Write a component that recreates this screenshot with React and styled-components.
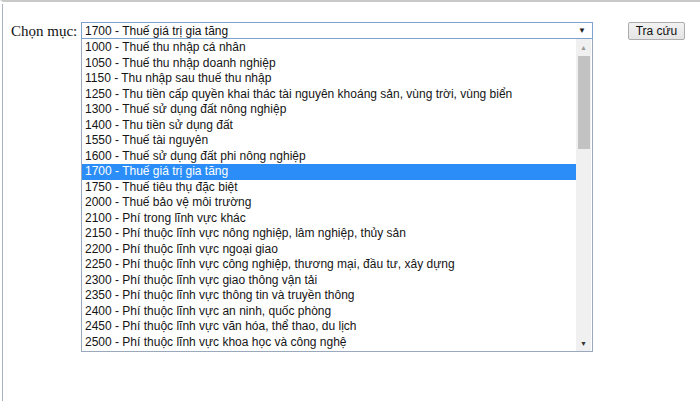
import React from 'react';
import styled, { createGlobalStyle } from 'styled-components';

const GlobalStyle = createGlobalStyle`
	html, body {
		margin: 0;
		padding: 0;
		background: #ffffff;
	}
	body {
		font-family: 'Liberation Sans', Arial, sans-serif;
	}
`;

const options = [
	'1000 - Thuế thu nhập cá nhân',
	'1050 - Thuế thu nhập doanh nghiệp',
	'1150 - Thu nhập sau thuế thu nhập',
	'1250 - Thu tiền cấp quyền khai thác tài nguyên khoáng sản, vùng trời, vùng biển',
	'1300 - Thuế sử dụng đất nông nghiệp',
	'1400 - Thu tiền sử dụng đất',
	'1550 - Thuế tài nguyên',
	'1600 - Thuế sử dụng đất phi nông nghiệp',
	'1700 - Thuế giá trị gia tăng',
	'1750 - Thuế tiêu thụ đặc biệt',
	'2000 - Thuế bảo vệ môi trường',
	'2100 - Phí trong lĩnh vực khác',
	'2150 - Phí thuộc lĩnh vực nông nghiệp, lâm nghiệp, thủy sản',
	'2200 - Phí thuộc lĩnh vực ngoại giao',
	'2250 - Phí thuộc lĩnh vực công nghiệp, thương mại, đầu tư, xây dựng',
	'2300 - Phí thuộc lĩnh vực giao thông vận tải',
	'2350 - Phí thuộc lĩnh vực thông tin và truyền thông',
	'2400 - Phí thuộc lĩnh vực an ninh, quốc phòng',
	'2450 - Phí thuộc lĩnh vực văn hóa, thể thao, du lịch',
	'2500 - Phí thuộc lĩnh vực khoa học và công nghệ',
];

const selected = '1700 - Thuế giá trị gia tăng';

const App = () => {
	return (
		<>
			<GlobalStyle />
			<Frame>
				<Toolbar>
					<Label>Chọn mục:</Label>
					<SelectWrap>
						<SelectBox>
							<span>{selected}</span>
							<Caret>▼</Caret>
						</SelectBox>
						<Dropdown>
							<OptionList>
								{options.map((item) => (
									<Option key={item} active={item === selected}>
										{item}
									</Option>
								))}
							</OptionList>
							<ScrollBar>
								<ScrollArrow>▲</ScrollArrow>
								<Track>
									<Thumb />
								</Track>
								<ScrollArrow>▼</ScrollArrow>
							</ScrollBar>
						</Dropdown>
					</SelectWrap>
					<SearchButton>Tra cứu</SearchButton>
				</Toolbar>
			</Frame>
		</>
	);
};

export default App;

const Frame = styled.div`
	height: 401px;
	box-sizing: border-box;
	border-top: 2px solid #c9c9c9;
	border-left: 3px solid #ffffff;
	position: relative;
	&::before {
		content: '';
		position: absolute;
		left: -1px;
		top: 2px;
		bottom: 0;
		width: 1px;
		background: #a9b3c0;
	}
`;

const Toolbar = styled.div`
	display: flex;
	align-items: flex-start;
	padding: 20px 0 0 8px;
`;

const Label = styled.div`
	font-family: 'Liberation Serif', 'Times New Roman', serif;
	font-size: 15px;
	line-height: 18px;
	color: #111;
	width: 70px;
`;

const SelectWrap = styled.div`
	position: relative;
	width: 512px;
`;

const SelectBox = styled.div`
	height: 17px;
	box-sizing: border-box;
	border: 1px solid #7da2ce;
	display: flex;
	align-items: center;
	justify-content: space-between;
	padding: 0 6px 0 3px;
	font-size: 12px;
	color: #111;
`;

const Caret = styled.span`
	font-size: 8px;
	color: #222;
`;

const Dropdown = styled.div`
	position: absolute;
	top: 17px;
	left: 0;
	width: 512px;
	height: 313px;
	box-sizing: border-box;
	border: 1px solid #9aa9bd;
	border-top: none;
	background: #ffffff;
	display: flex;
	overflow: hidden;
`;

const OptionList = styled.div`
	flex: 1;
	padding-top: 1px;
	overflow: hidden;
`;

const Option = styled.div`
	height: 15.5px;
	line-height: 15.5px;
	font-size: 12px;
	padding-left: 3px;
	white-space: nowrap;
	color: ${(p) => (p.active ? '#ffffff' : '#151515')};
	background: ${(p) => (p.active ? '#2b8ef8' : 'transparent')};
`;

const ScrollBar = styled.div`
	width: 15px;
	background: #f0f0f0;
	display: flex;
	flex-direction: column;
	margin-right: 1px;
`;

const ScrollArrow = styled.div`
	height: 16px;
	font-size: 7px;
	color: #9a9a9a;
	display: flex;
	align-items: center;
	justify-content: center;
	&:last-child {
		color: #333;
	}
`;

const Track = styled.div`
	flex: 1;
	padding: 1px 1px 0 2px;
`;

const Thumb = styled.div`
	height: 93px;
	background: #c2c2c2;
`;

const SearchButton = styled.button`
	margin-left: 35px;
	width: 57px;
	height: 18px;
	padding: 0;
	font-family: 'Liberation Sans', Arial, sans-serif;
	font-size: 12px;
	color: #111;
	border: 1px solid #acacac;
	border-radius: 2px;
	background: linear-gradient(#f2f2f2, #e4e4e4);
`;
